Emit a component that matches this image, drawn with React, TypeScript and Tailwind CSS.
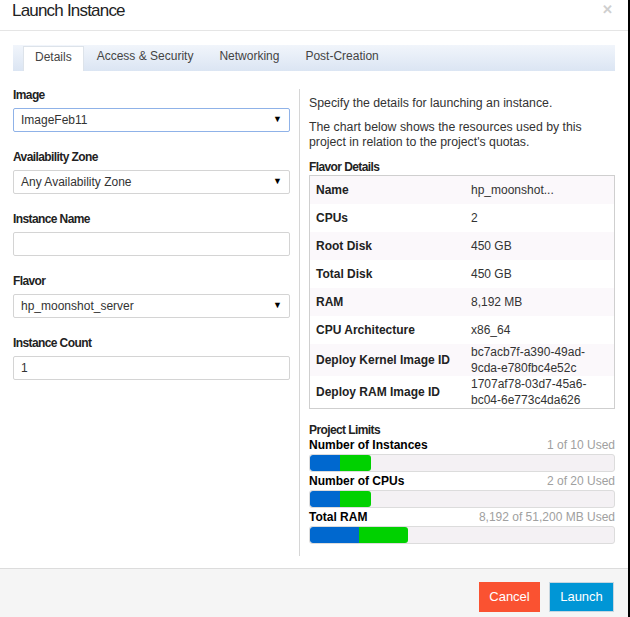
import React from 'react';

interface FieldProps {
    label: string;
    value?: string;
    select?: boolean;
    focused?: boolean;
}

// headings in the reference use a narrow face, so squeeze Liberation Sans a bit
const headingCls = 'h-[15px] text-[12px] font-bold leading-[15px] tracking-[-0.6px] text-[#222]';

const Field: React.FC<FieldProps> = ({ label, value, select, focused }) => (
    <div className="mb-[18px]">
        <div className={`${headingCls} mb-[5px]`}>{label}</div>
        <div className={`h-[24px] flex items-center px-[7px] border rounded-[2px] bg-white text-[12px] text-[#333] ${focused ? 'border-[#8fb2e8]' : 'border-[#d4d4d4]'}`}>
            <span className="flex-1">{value}</span>
            {select && <span className="text-[9px] text-black">▼</span>}
        </div>
    </div>
);

const flavorRows: [string, string[]][] = [
    ['Name', ['hp_moonshot...']],
    ['CPUs', ['2']],
    ['Root Disk', ['450 GB']],
    ['Total Disk', ['450 GB']],
    ['RAM', ['8,192 MB']],
    ['CPU Architecture', ['x86_64']],
    ['Deploy Kernel Image ID', ['bc7acb7f-a390-49ad-', '9cda-e780fbc4e52c']],
    ['Deploy RAM Image ID', ['1707af78-03d7-45a6-', 'bc04-6e773c4da626']],
];

const limits = [
    { label: 'Number of Instances', used: '1 of 10 Used', blue: 30, green: 31 },
    { label: 'Number of CPUs', used: '2 of 20 Used', blue: 30, green: 31 },
    { label: 'Total RAM', used: '8,192 of 51,200 MB Used', blue: 49, green: 49 },
];

const App: React.FC = () => {
    return (
        <div className="w-[630px] h-[617px] bg-white border-r-2 border-black flex flex-col overflow-hidden" style={{ fontFamily: '"Liberation Sans", Arial, sans-serif' }}>
            {/* header */}
            <div className="h-[31px] shrink-0 border-b border-[#e5e5e5] flex items-center justify-between pl-[12px] pr-[15px]">
                <span className="text-[17px] leading-none text-[#222] tracking-[-0.8px] -mt-[9px]">Launch Instance</span>
                <span className="text-[13px] font-bold text-[#cfcfcf] -mt-[10px]">✕</span>
            </div>

            <div className="flex-1 px-[13px] pt-[14px]">
                {/* tabs */}
                <div className="h-[26px] flex items-end pl-[10px] bg-gradient-to-b from-[#f1f5fb] to-[#dbe5f3] text-[12px] text-[#444]">
                    <div className="h-[25px] px-[11px] pb-[5px] bg-white border border-b-0 border-[#dde3ea] flex items-center">Details</div>
                    <div className="h-[25px] px-[13px] pb-[5px] flex items-center">Access &amp; Security</div>
                    <div className="h-[25px] px-[13px] pb-[5px] flex items-center">Networking</div>
                    <div className="h-[25px] px-[13px] pb-[5px] flex items-center">Post-Creation</div>
                </div>

                <div className="flex mt-[18px]">
                    {/* left */}
                    <div className="w-[277px] shrink-0 -mt-[1px]">
                        <Field label="Image" value="ImageFeb11" select focused />
                        <Field label="Availability Zone" value="Any Availability Zone" select />
                        <Field label="Instance Name" value="" />
                        <Field label="Flavor" value="hp_moonshot_server" select />
                        <Field label="Instance Count" value="1" />
                    </div>

                    {/* divider */}
                    <div className="ml-[9px] w-px h-[467px] bg-[#d6d6d6]" />

                    {/* right */}
                    <div className="ml-[9px] w-[306px] text-[12.3px] text-[#333]">
                        <p className="mt-[7px] leading-[15px]">Specify the details for launching an instance.</p>
                        <p className="mt-[9px] leading-[15px]">The chart below shows the resources used by this project in relation to the project's quotas.</p>
                        <div className={`${headingCls} mt-[10px]`}>Flavor Details</div>
                        <div className="border border-[#cfcfcf] text-[12px]">
                            {flavorRows.map(([k, v], i) => (
                                <div key={k} className={`flex items-center ${v.length > 1 ? 'h-[32px]' : 'h-[28px]'} ${i % 2 === 0 ? 'bg-[#fbf8fb]' : 'bg-white'}`}>
                                    <div className="w-[161px] pl-[6px] font-bold text-[#222]">{k}</div>
                                    <div className="leading-[16px] text-[#333]">
                                        {v.map(line => <div key={line}>{line}</div>)}
                                    </div>
                                </div>
                            ))}
                        </div>

                        <div className={`${headingCls} mt-[14px]`}>Project Limits</div>
                        {limits.map(l => (
                            <div key={l.label} className="mb-[2px] text-[12px]">
                                <div className="flex justify-between leading-[15px] h-[15px]">
                                    <span className="font-bold text-black">{l.label}</span>
                                    <span className="text-[#a0a0a0]">{l.used}</span>
                                </div>
                                <div className="mt-[1px] h-[18px] flex bg-[#f4f1f4] border border-[#dcdcdc] rounded-[3px] overflow-hidden">
                                    <div className="h-full bg-[#0068cf] rounded-l-[3px]" style={{ width: l.blue }} />
                                    <div className="h-full bg-[#00d100] rounded-r-[3px]" style={{ width: l.green }} />
                                </div>
                            </div>
                        ))}
                    </div>
                </div>
            </div>

            {/* footer */}
            <div className="h-[49px] shrink-0 bg-[#f5f5f5] border-t border-[#dcdcdc] flex items-start justify-end gap-[9px] pt-[13px] pr-[14px] text-[13px] text-white">
                <button className="h-[30px] w-[61px] bg-[#fa5231]">Cancel</button>
                <button className="h-[30px] w-[65px] bg-[#0096d6] border border-[#c6d6e0]">Launch</button>
            </div>
        </div>
    );
};

export default App;
